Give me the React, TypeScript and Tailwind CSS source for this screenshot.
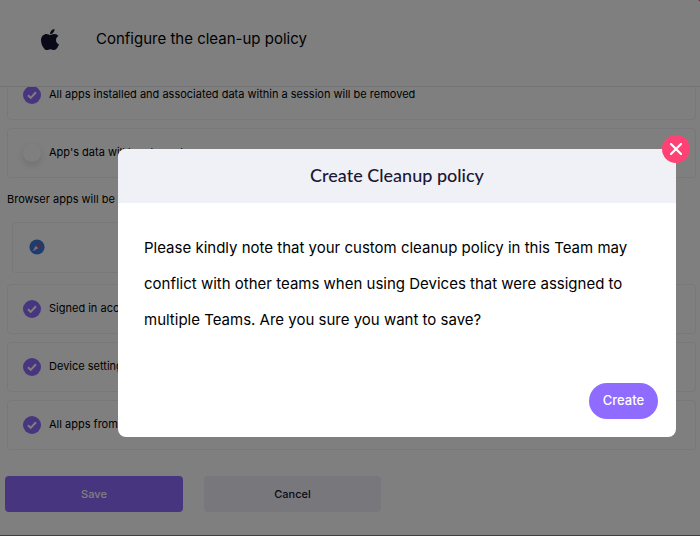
import React from "react";

function AppleLogo() {
  return (
    <svg viewBox="4 32 376 448" className="h-[21px] w-[18px] fill-[#14132e]" preserveAspectRatio="none" aria-label="Apple" role="img">
      <path d="M318.7 268.7c-.2-36.7 16.4-64.4 50-84.8-18.8-26.9-47.2-41.7-84.7-44.6-35.500-2.800-74.300 20.700-88.500 20.700-15 0-49.400-19.700-76.400-19.700C63.300 141.200 4 184.800 4 273.500q0 39.300 14.400 81.200c12.800 36.700 59 126.700 107.200 125.200 25.200-.6 43-17.900 75.800-17.900 31.800 0 48.300 17.900 76.400 17.900 48.600-.7 90.400-82.500 102.600-119.300-65.200-30.700-61.700-90-61.700-91.900zm-56.600-164.200c27.300-32.400 24.800-61.900 24-72.500-24.100 1.400-52 16.400-67.900 34.900-17.500 19.800-27.800 44.300-25.600 71.900 26.100 2 49.900-11.400 69.500-34.300z" />
    </svg>
  );
}

function SafariIcon() {
  return (
    <svg viewBox="0 0 16 16" className="size-4" aria-label="Safari" role="img">
      <circle cx="8" cy="8" r="7.600" fill="#3f78dc" />
      <path d="M12.300 3.700 6.800 6.800l2.400 2.400z" fill="#e8404a" />
      <path d="M3.700 12.300 6.800 6.800l2.400 2.400z" fill="#e4e8f0" />
    </svg>
  );
}

function OptionRow({ label, checked = false }: { label: string; checked?: boolean }) {
  return (
    <label className="flex h-[50px] items-center gap-2 rounded border border-[#f0f1f5] pl-[15px] text-[11px] text-black">
      <span className="grid size-[18px] shrink-0 place-items-center">
        <input
          type="checkbox"
          defaultChecked={checked}
          className="peer col-start-1 row-start-1 size-[18px] appearance-none rounded-full bg-white shadow-[0_3px_8px_rgba(0,0,0,0.14)] checked:bg-[#8f6bff] checked:shadow-none"
        />
        <svg viewBox="0 0 10 10" className="pointer-events-none col-start-1 row-start-1 hidden size-[10px] peer-checked:block" fill="none" stroke="white" strokeWidth="2">
          <path d="m1 5.200 2.700 2.700L9 2.200" />
        </svg>
      </span>
      <span className="pb-0.5">{label}</span>
    </label>
  );
}

function ConfirmDialog() {
  return (
    <div className="fixed inset-0 bg-black/50 pt-[149px] pr-6 pl-[118px]">
      <div role="dialog" aria-modal="true" aria-labelledby="dialog-title" className="relative rounded-lg bg-white">
        <button type="button" aria-label="Close" className="absolute -top-3.5 -right-3.5 flex size-7 items-center justify-center rounded-full bg-[#ff4275]">
          <svg viewBox="0 0 12 12" className="size-3" stroke="white" strokeWidth="2.200" strokeLinecap="round">
            <path d="m1 1 10 10M11 1 1 11" />
          </svg>
        </button>
        <h2 id="dialog-title" className="flex h-[54px] items-center justify-center rounded-t-lg bg-[#f0f1f6] pb-0.5 font-['Lato'] text-lg font-medium text-[#1b1836]">
          Create Cleanup policy
        </h2>
        <p className="px-[26px] pt-[27px] text-[15px] leading-9 text-black">
          Please kindly note that your custom cleanup policy in this Team may conflict with other teams when using Devices that were assigned to multiple Teams. Are you sure you want to save?
        </p>
        <div className="flex justify-end px-[18px] pt-[45px] pb-[18px]">
          <button type="button" className="h-9 w-[69px] rounded-full bg-[#8f6bff] text-[13px] font-medium text-white">
            Create
          </button>
        </div>
      </div>
    </div>
  );
}

export default function App() {
  return (
    <div className="relative flex min-h-screen flex-col overflow-hidden border-b border-[#808080] bg-white font-['Inter',sans-serif]">
      <span className="absolute -top-[22px] -right-6 size-7 rounded-full bg-[#ff4275]" />
      <header className="flex h-[87px] items-center border-b border-[#e9e9ee] pb-2 pl-[41px]">
        <AppleLogo />
        <h1 className="ml-[37px] text-[15px] text-black">Configure the clean-up policy</h1>
      </header>
      <main className="overflow-hidden pr-1 pl-[7px]">
        <div className="-mt-[17px] flex flex-col gap-2">
          <OptionRow label="All apps installed and associated data within a session will be removed" checked />
          <OptionRow label="App's data will be cleared" />
        </div>
        <p className="flex h-[44px] items-center pb-0.5 text-[11px] text-black">Browser apps will be</p>
        <div className="ml-[5px] flex h-[51px] w-1/2 items-center rounded border border-[#f0f1f5] pb-0.5 pl-4">
          <SafariIcon />
        </div>
        <div className="mt-[11px] flex flex-col gap-2">
          <OptionRow label="Signed in accounts" checked />
          <OptionRow label="Device settings" checked />
          <OptionRow label="All apps from" checked />
        </div>
      </main>
      <footer className="flex gap-[21px] pt-[26px] pl-[5px] text-[11px] font-medium">
        <button type="button" className="h-9 w-[178px] rounded bg-[#8f6bff] text-white">Save</button>
        <button type="button" className="h-9 w-[177px] rounded bg-[#f0f1f8] text-[#14132e]">Cancel</button>
      </footer>
      <ConfirmDialog />
    </div>
  );
}
